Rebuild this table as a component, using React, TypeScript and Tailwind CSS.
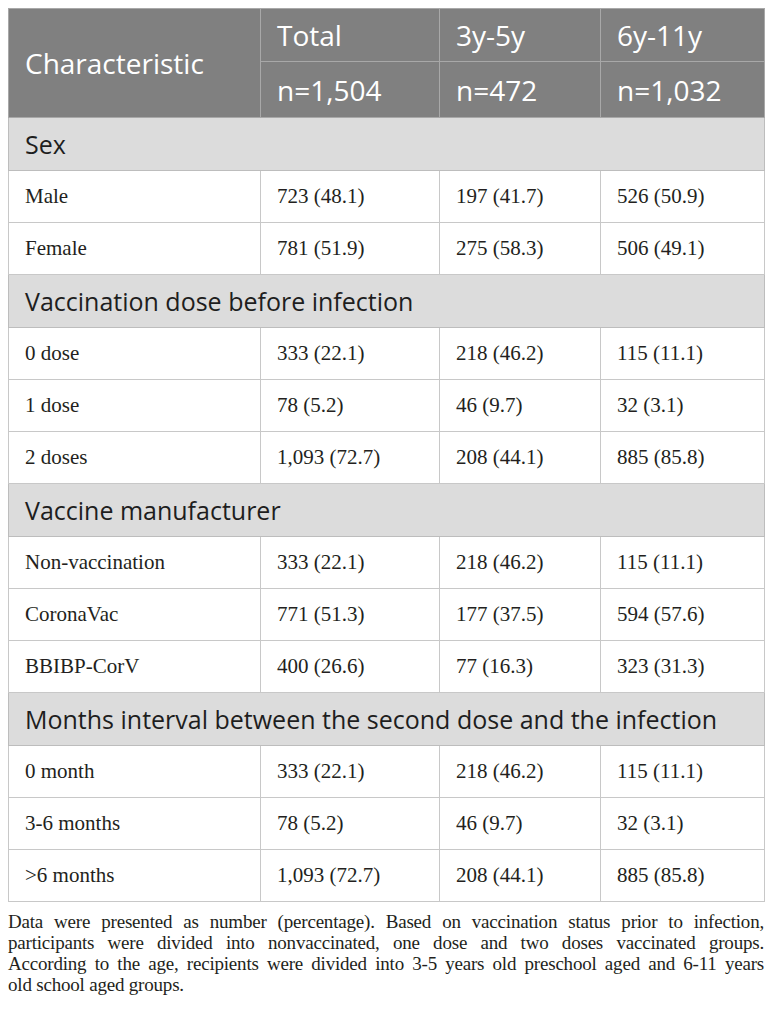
import React from "react";

//type
type Section = {
  title: string;
  rows: string[][];
};

//data
const sections: Section[] = [
  {
    title: "Sex",
    rows: [
      ["Male", "723 (48.1)", "197 (41.7)", "526 (50.9)"],
      ["Female", "781 (51.9)", "275 (58.3)", "506 (49.1)"],
    ],
  },
  {
    title: "Vaccination dose before infection",
    rows: [
      ["0 dose", "333 (22.1)", "218 (46.2)", "115 (11.1)"],
      ["1 dose", "78 (5.2)", "46 (9.7)", "32 (3.1)"],
      ["2 doses", "1,093 (72.7)", "208 (44.1)", "885 (85.8)"],
    ],
  },
  {
    title: "Vaccine manufacturer",
    rows: [
      ["Non-vaccination", "333 (22.1)", "218 (46.2)", "115 (11.1)"],
      ["CoronaVac", "771 (51.3)", "177 (37.5)", "594 (57.6)"],
      ["BBIBP-CorV", "400 (26.6)", "77 (16.3)", "323 (31.3)"],
    ],
  },
  {
    title: "Months interval between the second dose and the infection",
    rows: [
      ["0 month", "333 (22.1)", "218 (46.2)", "115 (11.1)"],
      ["3-6 months", "78 (5.2)", "46 (9.7)", "32 (3.1)"],
      [">6 months", "1,093 (72.7)", "208 (44.1)", "885 (85.8)"],
    ],
  },
];

const footnote = [
  "Data were presented as number (percentage). Based on vaccination status prior to infection,",
  "participants were divided into nonvaccinated, one dose and two doses vaccinated groups.",
  "According to the age, recipients were divided into 3-5 years old preschool aged and 6-11 years",
];

const headCell =
  "border border-[#a8a8a8] px-4 text-left font-normal text-white text-[28px] leading-none";

//component
function App() {
  return (
    <div className="bg-white w-[772px] min-h-[1024px] pt-2 px-2">
      <table className="table-fixed border-collapse w-[756px] font-['Open_Sans',sans-serif]">
        <colgroup>
          <col className="w-[252px]" />
          <col className="w-[179px]" />
          <col className="w-[161px]" />
          <col className="w-[164px]" />
        </colgroup>

        {/* header */}
        <thead className="bg-[#808080]">
          <tr className="h-[53px]">
            <th rowSpan={2} className={headCell}>
              Characteristic
            </th>
            <th className={headCell}>Total</th>
            <th className={headCell}>3y-5y</th>
            <th className={headCell}>6y-11y</th>
          </tr>
          <tr className="h-[56px]">
            <th className={headCell}>n=1,504</th>
            <th className={headCell}>n=472</th>
            <th className={headCell}>n=1,032</th>
          </tr>
        </thead>

        {/* body */}
        <tbody>
          {sections.map((section) => (
            <React.Fragment key={section.title}>
              <tr className="h-[53px] bg-[#dcdcdc]">
                <td
                  colSpan={4}
                  className="border border-[#bdbdbd] px-4 text-[25px] leading-none text-[#1e1e1e] whitespace-nowrap"
                >
                  {section.title}
                </td>
              </tr>
              {section.rows.map((row, index) => (
                <tr key={index} className="h-[52px]">
                  {row.map((cell, i) => (
                    <td
                      key={i}
                      className="border border-[#c8c8c8] px-4 font-['Liberation_Serif',serif] text-[21px] leading-none text-[#231f20]"
                    >
                      {cell}
                    </td>
                  ))}
                </tr>
              ))}
            </React.Fragment>
          ))}
        </tbody>
      </table>

      {/* footnote */}
      <p className="mt-[9px] w-[756px] font-['Liberation_Serif',serif] text-[19px] tracking-[-0.2px] leading-[21px] text-[#231f20]">
        {footnote.map((line) => (
          <span
            key={line}
            className="block whitespace-nowrap text-justify [text-align-last:justify]"
          >
            {line}
          </span>
        ))}
        <span className="block">old school aged groups.</span>
      </p>
    </div>
  );
}

export default App;
